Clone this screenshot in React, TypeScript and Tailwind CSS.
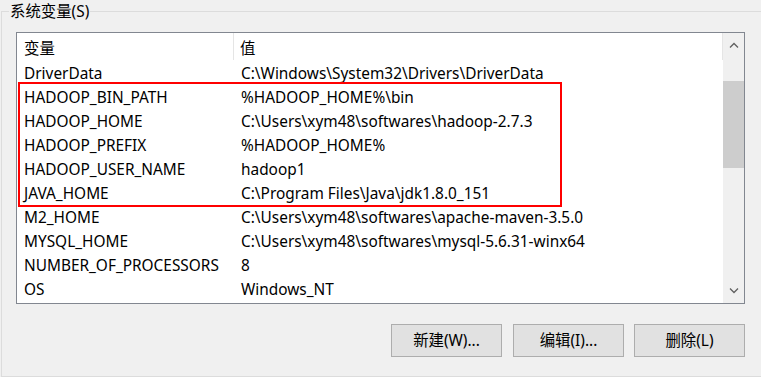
import React from 'react';

const rows: [string, string][] = [
  ['DriverData', 'C:\\Windows\\System32\\Drivers\\DriverData'],
  ['HADOOP_BIN_PATH', '%HADOOP_HOME%\\bin'],
  ['HADOOP_HOME', 'C:\\Users\\xym48\\softwares\\hadoop-2.7.3'],
  ['HADOOP_PREFIX', '%HADOOP_HOME%'],
  ['HADOOP_USER_NAME', 'hadoop1'],
  ['JAVA_HOME', 'C:\\Program Files\\Java\\jdk1.8.0_151'],
  ['M2_HOME', 'C:\\Users\\xym48\\softwares\\apache-maven-3.5.0'],
  ['MYSQL_HOME', 'C:\\Users\\xym48\\softwares\\mysql-5.6.31-winx64'],
  ['NUMBER_OF_PROCESSORS', '8'],
  ['OS', 'Windows_NT'],
];

const font = "font-['Noto_Sans','Noto_Sans_CJK_SC',sans-serif]";

function Chevron({ up }: { up?: boolean }) {
  return (
    <svg width="10" height="6" viewBox="0 0 10 6" className="block">
      <path
        d={up ? 'M1 5.5 L5 1.5 L9 5.5' : 'M1 0.5 L5 4.5 L9 0.5'}
        fill="none"
        stroke="#606060"
        strokeWidth="1.3"
      />
    </svg>
  );
}

export default function App() {
  return (
    <div className={`w-[761px] h-[377px] bg-[#f0f0f0] overflow-hidden ${font} text-[15.4px] text-black`}>
      <div className="relative mt-[11px] ml-[1px] w-[780px] h-[366px] border border-[#dcdcdc]">
        <span className="absolute left-[7px] top-[-10px] px-[1px] bg-[#f0f0f0] leading-[20px]">系统变量(S)</span>

        <div className="ml-[14px] mt-[20px] w-[729px] h-[272px] border border-[#828790] bg-white flex">
          <div className="relative w-[706px] flex flex-col">
            <div className="h-[27px] flex shrink-0">
              <div className="w-[217px] h-full pl-[7px] pt-[5px] flex items-center border-r border-[#e5e5e5]">变量</div>
              <div className="flex-1 h-full pl-[6px] pt-[5px] flex items-center border-r border-[#e5e5e5]">值</div>
            </div>
            {rows.map(([k, v]) => (
              <div key={k} className="h-[24px] pt-[3px] flex items-center shrink-0">
                <div className="w-[217px] pl-[7px] whitespace-nowrap">{k}</div>
                <div className="flex-1 pl-[7px] whitespace-nowrap">{v}</div>
              </div>
            ))}
            <div className="absolute left-[1px] top-[49px] w-[544px] h-[125px] border-2 border-[#ff0000]" />
          </div>
          <div className="w-[21px] bg-[#f0f0f0] flex flex-col items-center">
            <div className="h-[24px] flex items-center justify-center">
              <Chevron up />
            </div>
            <div className="h-[24px]" />
            <div className="w-full h-[87px] bg-[#cdcdcd]" />
            <div className="flex-1" />
            <div className="h-[24px] flex items-center justify-center">
              <Chevron />
            </div>
          </div>
        </div>

        <div className="mt-[20px] w-[743px] flex justify-end">
          {['新建(W)...', '编辑(I)...', '删除(L)'].map((t, i) => (
            <button
              key={t}
              className={`w-[111px] h-[33px] bg-[#e1e1e1] border border-[#adadad] ${i === 0 ? '' : i === 1 ? 'ml-[11px]' : 'ml-[10px]'}`}
            >
              {t}
            </button>
          ))}
        </div>
      </div>
    </div>
  );
}
